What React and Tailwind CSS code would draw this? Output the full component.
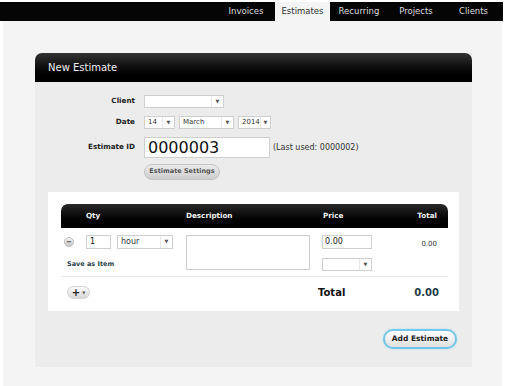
import React from "react";

const tabs = [
  { label: "Invoices", w: "w-[58px]" },
  { label: "Estimates", w: "w-[55px]", active: true },
  { label: "Recurring", w: "w-[58px]" },
  { label: "Projects", w: "w-[56px]" },
  { label: "Clients", w: "w-[59px]" },
];

// Fake select box with the little arrow on the right
const Select = ({ value, className, textSize = "text-[7px]" }) => (
  <div className={`flex h-[13px] items-stretch border border-[#cfcfcf] bg-white ${className}`}>
    <span className={`flex-1 pl-[3px] leading-[11px] text-[#333] ${textSize}`}>{value}</span>
    <span className="flex w-[12px] items-center justify-center border-l border-[#e8e8e8] text-[5px] text-[#555]">
      ▼
    </span>
  </div>
);

const App = () => {
  return (
    <div className="h-[386px] w-[524px] bg-white font-['DejaVu_Sans',sans-serif]">
      <div className="w-[503px] pt-[2px]">
        {/* Top navigation */}
        <div className="flex h-[19px] justify-end bg-[#050505]">
          {tabs.map((t) => (
            <div
              key={t.label}
              className={`flex items-center justify-center text-[8.5px] ${t.w} ${
                t.active ? "bg-[#f4f4f4] text-[#333]" : "text-[#ddd]"
              }`}
            >
              {t.label}
            </div>
          ))}
        </div>

        {/* Page */}
        <div className="ml-[3px] h-[365px] w-[499px] bg-[#f4f4f4] pl-[32px] pt-[32px]">
          <div className="w-[437px] bg-[#ececec] pb-[18px]">
            {/* Panel header */}
            <div className="flex h-[29px] items-center rounded-t-[7px] bg-gradient-to-b from-[#333] to-[#000] pl-[13px] text-[10px] text-[#f0f0f0]">
              New Estimate
            </div>

            {/* Form */}
            <div className="flex flex-col gap-[8px] pt-[13px]">
              <div className="flex items-center">
                <span className="w-[100px] text-right text-[7.2px] font-bold text-[#222]">Client</span>
                <Select value="" className="ml-[9px] w-[80px]" />
              </div>
              <div className="flex items-center">
                <span className="w-[100px] text-right text-[7.2px] font-bold text-[#222]">Date</span>
                <Select value="14" className="ml-[9px] w-[31px]" />
                <Select value="March" className="ml-[4px] w-[55px]" />
                <Select value="2014" className="ml-[4px] w-[33px]" />
              </div>
              <div className="flex items-center">
                <span className="w-[100px] text-right text-[7.2px] font-bold text-[#222]">Estimate ID</span>
                <div className="ml-[9px] flex h-[21px] w-[126px] items-center border border-[#cfcfcf] bg-white pl-[3px] text-[16px] leading-none text-[#111]">
                  0000003
                </div>
                <span className="ml-[3px] text-[8px] text-[#333]">(Last used: 0000002)</span>
              </div>
            </div>
            <div className="mt-[6px] pl-[109px]">
              <div className="flex h-[16px] w-[76px] items-center justify-center rounded-full border border-[#c4c4c4] bg-gradient-to-b from-[#ececec] to-[#cdcdcd] text-[6.5px] font-bold text-[#555]">
                Estimate Settings
              </div>
            </div>

            {/* Line items box */}
            <div className="mx-[13px] mt-[12px] bg-white pb-[11px] pl-[13px] pr-[11px] pt-[12px]">
              <div className="flex h-[24px] items-center rounded-t-[7px] bg-gradient-to-b from-[#2a2a2a] to-[#000] text-[7.2px] font-bold text-[#f0f0f0]">
                <span className="w-[125px] pl-[25px]">Qty</span>
                <span className="w-[136px]">Description</span>
                <span className="w-[80px] pl-[1px]">Price</span>
                <span className="flex-1 pr-[11px] text-right">Total</span>
              </div>

              <div className="flex border-b border-[#e6e6e6] pb-[5px] pt-[7px]">
                <div className="flex w-[125px] flex-col">
                  <div className="flex items-center">
                    <span className="ml-[3px] flex h-[10px] w-[10px] items-center justify-center rounded-full border border-[#bdbdbd] bg-gradient-to-b from-[#f4f4f4] to-[#c8c8c8] text-[7px] font-bold leading-none text-[#333]">
                      −
                    </span>
                    <div className="ml-[12px] flex h-[14px] w-[25px] items-center border border-[#cfcfcf] bg-white pl-[3px] text-[8px] text-[#111]">
                      1
                    </div>
                    <Select value="hour" textSize="text-[8px]" className="ml-[6px] h-[14px] w-[56px]" />
                  </div>
                  <span className="ml-[6px] mt-[11px] text-[6.5px] font-bold text-[#2b3f4c]">Save as Item</span>
                </div>
                <div className="w-[136px]">
                  <div className="h-[35px] w-[124px] border border-[#cfcfcf] bg-white"></div>
                </div>
                <div className="flex w-[80px] flex-col gap-[9px]">
                  <div className="flex h-[14px] w-[50px] items-center border border-[#cfcfcf] bg-white pl-[2px] text-[8px] text-[#222]">
                    0.00
                  </div>
                  <Select value="" className="w-[50px]" />
                </div>
                <div className="flex-1 pr-[11px] pt-[4px] text-right text-[7px] text-[#333]">0.00</div>
              </div>

              <div className="flex items-center pt-[8px]">
                <div className="ml-[6px] flex h-[13px] w-[23px] items-center justify-center gap-[2px] rounded-full border border-[#d4d4d4] bg-gradient-to-b from-[#fafafa] to-[#d8d8d8]">
                  <span className="text-[10px] font-bold leading-none text-[#222]">+</span>
                  <span className="text-[4px] text-[#555]">▼</span>
                </div>
                <span className="ml-[228px] text-[10px] font-bold text-[#111]">Total</span>
                <span className="ml-auto pr-[9px] text-[10px] font-bold text-[#1d3a48]">0.00</span>
              </div>
            </div>

            {/* Submit */}
            <div className="mt-[18px] flex justify-end pr-[15px]">
              <div className="flex h-[20px] w-[74px] items-center justify-center rounded-full border-2 border-[#74c6e8] bg-gradient-to-b from-[#ffffff] to-[#e0e0e0] text-[7.5px] font-bold text-[#222] shadow-[0_0_2px_#9fd8f0]">
                Add Estimate
              </div>
            </div>
          </div>
        </div>
      </div>
    </div>
  );
};

export default App;
